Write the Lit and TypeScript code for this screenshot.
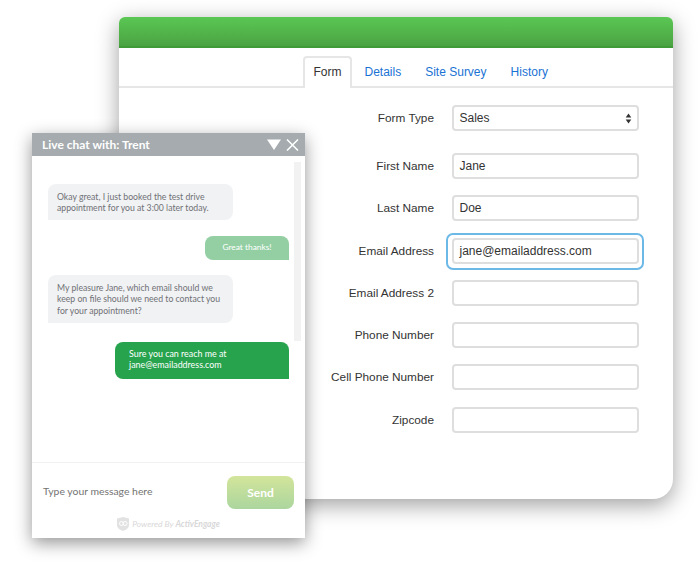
import { LitElement, html, css, svg } from "lit";
import { customElement } from "lit/decorators.js";

const rows = [
  ["First Name", "Jane"],
  ["Last Name", "Doe"],
  ["Email Address", "jane@emailaddress.com", "focus"],
  ["Email Address 2", ""],
  ["Phone Number", ""],
  ["Cell Phone Number", ""],
  ["Zipcode", ""],
];

@customElement("app-root")
export class AppRoot extends LitElement {
  static styles = css`
    :host { display: block; position: relative; width: 700px; height: 574px; background: #fff; overflow: hidden; font-family: "Liberation Sans", Arial, sans-serif; }
    .win { position: absolute; left: 119px; top: 17px; width: 554px; height: 482px; background: #fff; border-radius: 6px 6px 20px 6px;
      box-shadow: 0 6px 22px rgba(0,0,0,.38); display: flex; flex-direction: column; }
    .bar { height: 28.5px; flex: none; border-radius: 6px 6px 0 0; background: linear-gradient(#5ac754, #4ba342); border-bottom: 2px solid #3f9a38; }
    .tabs { display: flex; height: 30.5px; margin-top: 8px; padding-left: 183.5px; border-bottom: 2px solid #e6e6e6; flex: none; font-size: 12px; }
    .tab { color: #1a73d4; padding: 9px 12px 0; line-height: 14px; }
    .tab.on { color: #333; background: #fff; border: 2px solid #e6e6e6; border-bottom: 0; border-radius: 4px 4px 0 0; padding: 7px 8px 0 9px; margin-bottom: -2px; height: 23.5px; margin-right: 1px; }
    .form { display: flex; flex-direction: column; padding-top: 17px; }
    .row { display: grid; grid-template-columns: 315px 187px; column-gap: 18px; align-items: center; height: 26px; margin-bottom: 16.3px; font-size: 11.8px; color: #333; }
    .row.first { margin-bottom: 22px; }
    .row label { text-align: right; }
    .box { box-sizing: border-box; height: 26px; border: 2px solid #dedede; border-radius: 4px; background: #fff; padding: 0 5.5px; line-height: 22px; color: #333; font-size: 12px; display: flex; align-items: center; justify-content: space-between; position: relative; }
    .box.focus::after { content: ""; position: absolute; inset: -7px -7px -8px -8px; border: 2px solid #6cb9e8; border-radius: 7px; }
    .chat { position: absolute; left: 32px; top: 133px; width: 273px; height: 405px; background: #fff; box-shadow: 0 5px 16px rgba(0,0,0,.42); display: flex; flex-direction: column; font-family: Lato, "Noto Sans", sans-serif; }
    .chead { height: 23px; background: #a5abae; color: #fff; font-weight: 700; font-size: 12px; display: flex; align-items: center; justify-content: space-between; padding: 0 6px 0 10px; flex: none; }
    .chead svg { display: block; }
    .body { height: 307px; flex: none; position: relative; display: flex; flex-direction: column; padding: 28px 16px 0; font-size: 8.7px; line-height: 11.5px; box-sizing: border-box; border-bottom: 1px solid #f1f1f1; }
    .scroll { position: absolute; right: 4px; top: 6px; width: 7px; height: 179px; background: #f2f2f2; }
    .m { box-sizing: border-box; border-radius: 8px 8px 8px 0; }
    .in { width: 185px; background: #f1f2f4; color: #6f7174; padding: 6.5px 9px; }
    .great { align-self: flex-end; background: #93cfa3; color: #fff; border-radius: 8px 8px 0 8px; height: 24px; width: 84px; margin: 16px 0 15px; text-align: center; line-height: 23px; font-size: 8.4px; }
    .sure { align-self: flex-end; background: #27a34d; color: #fff; width: 174px; height: 37px; padding: 6px 14px; border-radius: 8px 8px 0 8px; margin-top: 19px; font-size: 8.9px; }
    .inp { display: flex; justify-content: space-between; align-items: center; padding: 13px 11px 0; font-size: 10.4px; color: #737373; }
    .inp span { margin-bottom: 3px; }
    .send { width: 67px; height: 33px; border-radius: 8px; background: linear-gradient(#d3e59b, #abd59e); color: #fff; font-weight: 700; font-size: 12px; display: flex; align-items: center; justify-content: center; }
    .pow { display: flex; justify-content: center; align-items: center; gap: 3px; margin-top: 8px; color: #d8d8d8; font-size: 8.5px; font-style: italic; }
    .pow b { font-weight: 700; }
  `;

  render() {
    return html`
      <div class="win">
        <div class="bar"></div>
        <div class="tabs">
          <div class="tab on">Form</div>
          <div class="tab">Details</div>
          <div class="tab">Site Survey</div>
          <div class="tab">History</div>
        </div>
        <div class="form">
          <div class="row first">
            <label>Form Type</label>
            <div class="box">Sales
              <svg width="7" height="11" viewBox="0 0 7 11">${svg`<path d="M3.5 0.5 6.3 4.5H.7ZM3.5 10.5 .7 6.5H6.3Z" fill="#333"/>`}</svg>
            </div>
          </div>
          ${rows.map(([l, v, f]) => html`
            <div class="row"><label>${l}</label><div class="box ${f ?? ""}">${v}</div></div>`)}
        </div>
      </div>
      <div class="chat">
        <div class="chead">
          <span>Live chat with: Trent</span>
          <svg width="32" height="14" viewBox="0 0 32 14">${svg`<path d="M0 1.5H14L7 12Z" fill="#fff"/><path d="M20 1.5 31 12.5M31 1.5 20 12.5" stroke="#fff" stroke-width="1.6" fill="none"/>`}</svg>
        </div>
        <div class="body">
          <div class="scroll"></div>
          <div class="m in">Okay great, I just booked the test drive appointment for you at 3:00 later today.</div>
          <div class="m great">Great thanks!</div>
          <div class="m in">My pleasure Jane, which email should we keep on file should we need to contact you for your appointment?</div>
          <div class="m sure">Sure you can reach me at<br>jane@emailaddress.com</div>
        </div>
        <div class="inp"><span>Type your message here</span><div class="send">Send</div></div>
        <div class="pow">
          <svg width="12" height="14" viewBox="0 0 12 14">${svg`<path d="M0 1.5 6 0 12 1.5V8C12 11 9 13 6 14 3 13 0 11 0 8Z" fill="#e2e2e2"/><circle cx="4.5" cy="6.5" r="2" fill="none" stroke="#fff"/><circle cx="8" cy="6.5" r="2" fill="none" stroke="#fff"/>`}</svg>
          <span>Powered By <b>ActivEngage</b></span>
        </div>
      </div>
    `;
  }
}
